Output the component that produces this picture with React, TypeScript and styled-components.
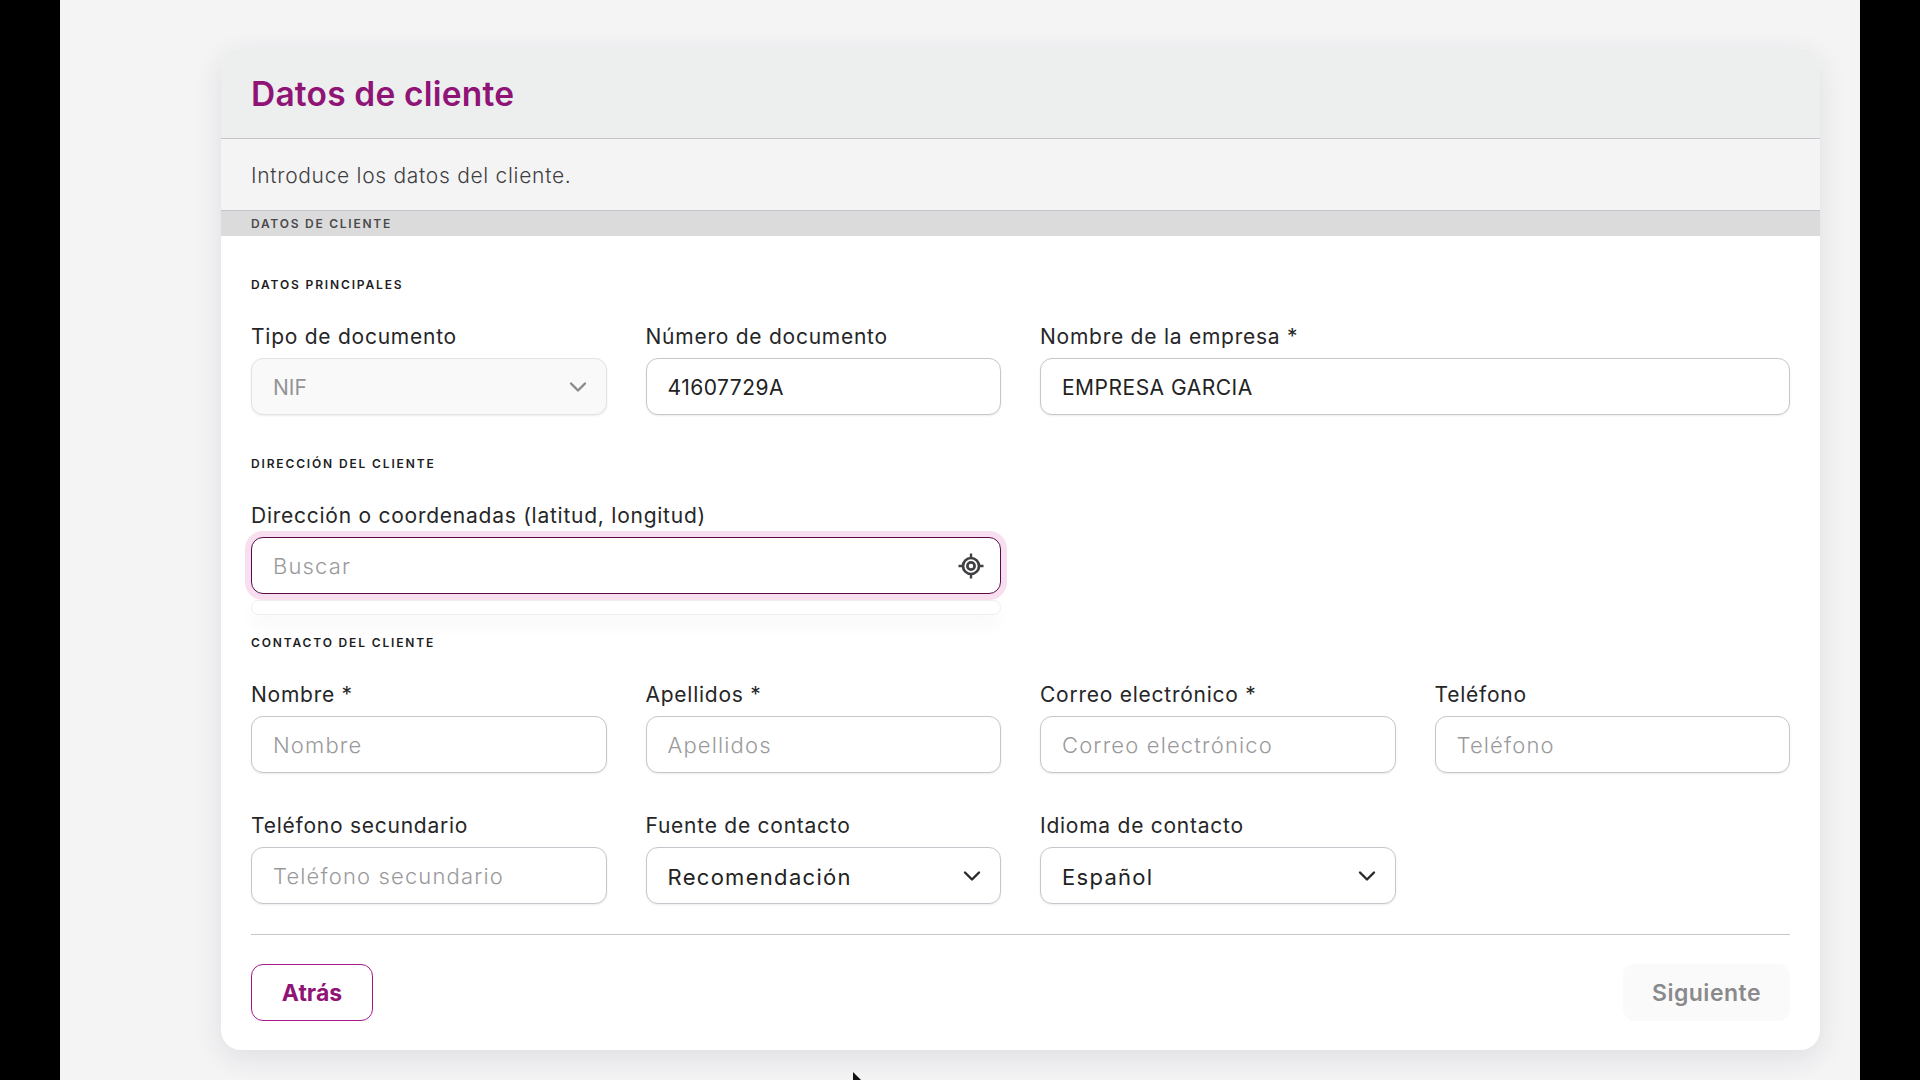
import React from "react";
import styled, { createGlobalStyle } from "styled-components";

const Global = createGlobalStyle`
  html, body { margin: 0; padding: 0; height: 100%; background: #000; overflow: hidden; }
  * { box-sizing: border-box; }
  #root { height: 100%; }
`;

const FONT = `Inter, "Noto Sans", "Liberation Sans", sans-serif`;

const Stage = styled.div`
  position: relative;
  width: 1800px;
  height: 1080px;
  margin-left: 60px;
  padding: 48px 40px 0 161px;
  background: #f4f4f5;
  font-family: ${FONT};
  color: #222;
  overflow: hidden;
`;

const Card = styled.section`
  width: 1599px;
  height: 1002px;
  background: #fff;
  border-radius: 20px;
  box-shadow: 0 8px 28px rgba(40, 40, 60, 0.1);
  overflow: hidden;
`;

const Header = styled.header`
  height: 91px;
  padding: 1px 30px 0;
  display: flex;
  align-items: center;
  background: #edefef;
  border-bottom: 1.5px solid #c3c3c9;
`;

const Title = styled.h1`
  margin: 0;
  font-size: 33.5px;
  font-weight: 600;
  letter-spacing: 0.2px;
  color: #8f1476;
`;

const Intro = styled.p`
  margin: 0;
  height: 71px;
  padding: 1px 30px 0;
  display: flex;
  align-items: center;
  background: #f4f4f5;
  font-size: 21px;
  font-weight: 300;
  letter-spacing: 0.7px;
  color: #3f3f42;
`;

const StepBar = styled.div`
  height: 26px;
  padding: 0 30px;
  display: flex;
  align-items: center;
  background: #dbdbdc;
  border-top: 1.5px solid #c4c4cc;
  font-size: 12px;
  font-weight: 600;
  letter-spacing: 1.75px;
  color: #4a4a4c;
`;

const Body = styled.div`
  padding: 41px 30px 0 30px;
`;

const SectionTitle = styled.h2`
  margin: 0 0 28px;
  height: 16px;
  line-height: 16px;
  font-size: 12px;
  font-weight: 600;
  letter-spacing: 1.85px;
  color: #1d1d1f;
`;

const Grid = styled.div<{ $mb: number }>`
  display: grid;
  grid-template-columns: repeat(4, 1fr);
  column-gap: 39px;
  row-gap: 37px;
  margin-bottom: ${(p) => p.$mb}px;
`;

const Field = styled.div<{ $span?: number }>`
  grid-column: span ${(p) => p.$span ?? 1};
  min-width: 0;
`;

const Label = styled.label`
  display: block;
  height: 32px;
  margin-bottom: 5px;
  line-height: 32px;
  font-size: 21px;
  font-weight: 400;
  letter-spacing: 0.75px;
  color: #262628;
  white-space: nowrap;
`;

const Input = styled.input`
  display: block;
  width: 100%;
  height: 57px;
  padding: 2px 21px 0;
  background: #fff;
  border: 1.5px solid #c6c6cc;
  border-radius: 12px;
  box-shadow: 0 1px 2px rgba(0, 0, 0, 0.08);
  font-family: ${FONT};
  font-size: 21px;
  letter-spacing: 0.5px;
  color: #222;
  outline: none;
  &::placeholder {
    color: #9a9a9c;
    opacity: 1;
    font-size: 22px;
    font-weight: 300;
    letter-spacing: 1.15px;
  }
`;

const SelectBox = styled.div<{ $disabled?: boolean }>`
  display: flex;
  align-items: center;
  justify-content: space-between;
  height: 57px;
  padding: 0 16px 0 21px;
  background: ${(p) => (p.$disabled ? "#f9f9f9" : "#fff")};
  border: 1.5px solid ${(p) => (p.$disabled ? "#e2e2e4" : "#c6c6cc")};
  border-radius: 12px;
  box-shadow: 0 1px 2px rgba(0, 0, 0, 0.08);
  font-size: ${(p) => (p.$disabled ? 21 : 22)}px;
  letter-spacing: ${(p) => (p.$disabled ? 0 : 1.3)}px;
  color: ${(p) => (p.$disabled ? "#949496" : "#222")};
`;

const SelectText = styled.span`
  padding-top: 2px;
`;

const SearchWrap = styled.div`
  position: relative;
`;

const SearchBox = styled.div`
  display: flex;
  align-items: center;
  justify-content: space-between;
  height: 57px;
  padding: 0 15px 0 21px;
  border: 1.5px solid #5a0a4a;
  border-radius: 12px;
  box-shadow: 0 0 0 6px #f8dff0;
  background: #fff;
`;

const SearchInput = styled(Input)`
  flex: 1;
  height: 100%;
  padding: 2px 0 0;
  border: none;
  box-shadow: none;
  background: transparent;
`;

const Dropdown = styled.div`
  position: absolute;
  left: 0;
  right: 0;
  top: 63px;
  height: 15px;
  background: #fff;
  border: 1px solid #eeeeee;
  border-radius: 9px;
  box-shadow: 0 10px 18px rgba(0, 0, 0, 0.035);
`;

const Footer = styled.footer`
  display: flex;
  justify-content: space-between;
  align-items: center;
  margin-top: 30px;
  padding-top: 29px;
  border-top: 1.5px solid #c6c6cc;
`;

const BackButton = styled.button`
  width: 122px;
  height: 57px;
  background: #fff;
  border: 1.5px solid #a3188a;
  border-radius: 12px;
  font-family: ${FONT};
  font-size: 23px;
  font-weight: 700;
  color: #8f1476;
`;

const NextButton = styled.button`
  width: 167px;
  height: 57px;
  background: #fafafa;
  border: none;
  border-radius: 12px;
  font-family: ${FONT};
  font-size: 23px;
  font-weight: 600;
  letter-spacing: 0.5px;
  color: #8a8a8c;
`;

const Cursor = styled.svg`
  position: absolute;
  left: 793px;
  top: 1072px;
`;

const Chevron = ({ color }: { color: string }) => (
  <svg width="24" height="24" viewBox="0 0 24 24" fill="none" stroke={color} strokeWidth="2.4" strokeLinecap="round" strokeLinejoin="round">
    <path d="M5 8.5l7 7 7-7" />
  </svg>
);

const Target = () => (
  <svg width="28" height="28" viewBox="0 0 28 28" fill="none" stroke="#414144" strokeWidth="2.7">
    <circle cx="14" cy="14" r="8" />
    <circle cx="14" cy="14" r="3.6" />
    <path d="M14 1.5v4M14 22.5v4M1.5 14h4M22.5 14h4" strokeWidth="2.4" />
  </svg>
);

export default function App() {
  return (
    <>
      <Global />
      <Stage>
        <Card>
          <Header>
            <Title>Datos de cliente</Title>
          </Header>
          <Intro>Introduce los datos del cliente.</Intro>
          <StepBar>DATOS DE CLIENTE</StepBar>
          <Body>
            <SectionTitle>DATOS PRINCIPALES</SectionTitle>
            <Grid $mb={41}>
              <Field>
                <Label>Tipo de documento</Label>
                <SelectBox $disabled>
                  <SelectText>NIF</SelectText>
                  <Chevron color="#8a8a8c" />
                </SelectBox>
              </Field>
              <Field>
                <Label>Número de documento</Label>
                <Input defaultValue="41607729A" />
              </Field>
              <Field $span={2}>
                <Label>Nombre de la empresa *</Label>
                <Input defaultValue="EMPRESA GARCIA" />
              </Field>
            </Grid>
            <SectionTitle>DIRECCIÓN DEL CLIENTE</SectionTitle>
            <Grid $mb={41}>
              <Field $span={2}>
                <Label>Dirección o coordenadas (latitud, longitud)</Label>
                <SearchWrap>
                  <SearchBox>
                    <SearchInput placeholder="Buscar" />
                    <Target />
                  </SearchBox>
                  <Dropdown />
                </SearchWrap>
              </Field>
            </Grid>
            <SectionTitle>CONTACTO DEL CLIENTE</SectionTitle>
            <Grid $mb={0}>
              <Field>
                <Label>Nombre *</Label>
                <Input placeholder="Nombre" />
              </Field>
              <Field>
                <Label>Apellidos *</Label>
                <Input placeholder="Apellidos" />
              </Field>
              <Field>
                <Label>Correo electrónico *</Label>
                <Input placeholder="Correo electrónico" />
              </Field>
              <Field>
                <Label>Teléfono</Label>
                <Input placeholder="Teléfono" />
              </Field>
              <Field>
                <Label>Teléfono secundario</Label>
                <Input placeholder="Teléfono secundario" />
              </Field>
              <Field>
                <Label>Fuente de contacto</Label>
                <SelectBox>
                  <SelectText>Recomendación</SelectText>
                  <Chevron color="#2a2a2c" />
                </SelectBox>
              </Field>
              <Field>
                <Label>Idioma de contacto</Label>
                <SelectBox>
                  <SelectText>Español</SelectText>
                  <Chevron color="#2a2a2c" />
                </SelectBox>
              </Field>
            </Grid>
            <Footer>
              <BackButton>Atrás</BackButton>
              <NextButton>Siguiente</NextButton>
            </Footer>
          </Body>
        </Card>
        <Cursor width="12" height="14" viewBox="0 0 12 14">
          <path d="M0 0l8 8H3.5L0 11z" fill="#111" />
        </Cursor>
      </Stage>
    </>
  );
}
